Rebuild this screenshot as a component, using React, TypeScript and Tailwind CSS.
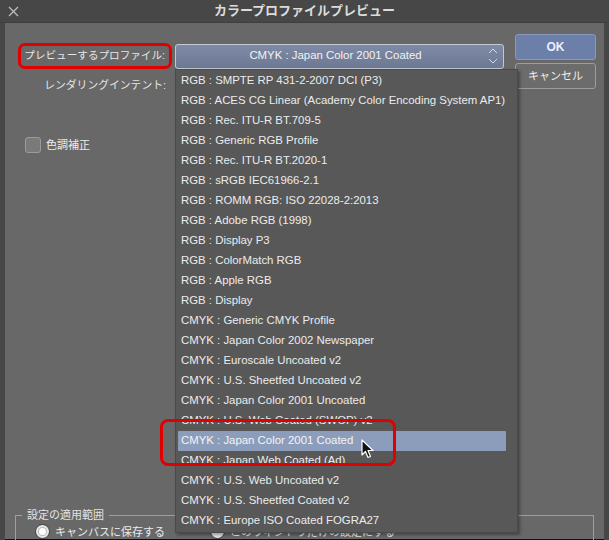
import React from "react";

const items = [
  "RGB : SMPTE RP 431-2-2007 DCI (P3)",
  "RGB : ACES CG Linear (Academy Color Encoding System AP1)",
  "RGB : Rec. ITU-R BT.709-5",
  "RGB : Generic RGB Profile",
  "RGB : Rec. ITU-R BT.2020-1",
  "RGB : sRGB IEC61966-2.1",
  "RGB : ROMM RGB: ISO 22028-2:2013",
  "RGB : Adobe RGB (1998)",
  "RGB : Display P3",
  "RGB : ColorMatch RGB",
  "RGB : Apple RGB",
  "RGB : Display",
  "CMYK : Generic CMYK Profile",
  "CMYK : Japan Color 2002 Newspaper",
  "CMYK : Euroscale Uncoated v2",
  "CMYK : U.S. Sheetfed Uncoated v2",
  "CMYK : Japan Color 2001 Uncoated",
  "CMYK : U.S. Web Coated (SWOP) v2",
  "CMYK : Japan Color 2001 Coated",
  "CMYK : Japan Web Coated (Ad)",
  "CMYK : U.S. Web Uncoated v2",
  "CMYK : U.S. Sheetfed Coated v2",
  "CMYK : Europe ISO Coated FOGRA27",
];

const selected = "CMYK : Japan Color 2001 Coated";

function Radio({ on }: { on?: boolean }) {
  return (
    <span className="flex h-[15px] w-[15px] shrink-0 items-center justify-center rounded-full border border-[#3a3a3a] bg-[#e8e8e8]">
      {on && <span className="h-[7px] w-[7px] rounded-full bg-white shadow-[0_0_0_1px_#bbb]" />}
    </span>
  );
}

export default function App() {
  return (
    <div
      className="relative flex h-[540px] w-[609px] flex-col overflow-hidden whitespace-nowrap bg-[#474747] text-[11.4px] text-[#ececec]"
      style={{ fontFamily: '"Liberation Sans", "Noto Sans CJK JP", sans-serif' }}
    >
      {/* title bar */}
      <div className="relative flex h-[23px] shrink-0 items-center justify-center border-b border-[#3e3e3e]">
        <svg className="absolute left-[8px] top-[6px]" width="11" height="11" viewBox="0 0 11 11">
          <path d="M1 1L10 10M10 1L1 10" stroke="#bdbdbd" strokeWidth="1.3" />
        </svg>
        <span className="text-[13px] font-bold text-[#dcdcdc]">カラープロファイルプレビュー</span>
      </div>

      {/* body */}
      <div className="mx-[5px] flex flex-1 flex-col border-b border-[#111] bg-[#686868]">
        <div className="flex pt-[11px] pr-[8px]">
          <div className="flex flex-1 flex-col">
            <div className="mt-[9px] flex items-center">
              <div className="ml-[13px] flex h-[26px] w-[154px] items-center justify-end rounded-[7px] border-[3px] border-[#e10000] pr-[4px] text-[10.6px] text-[#e6e6e6]">
                プレビューするプロファイル:
              </div>
              <div className="ml-[3px] flex h-[25px] w-[329px] items-center rounded-[3px] border border-[#c3c9d4] bg-gradient-to-b from-[#7f8ba6] to-[#6d7893] pl-[8px] pr-[4px]">
                <span className="flex-1 text-center text-[#f2f2f2]">{selected}</span>
                <svg width="12" height="20" viewBox="0 0 12 20">
                  <path d="M2 7L6 3L10 7M2 13L6 17L10 13" fill="none" stroke="#d6dae2" strokeWidth="1" />
                </svg>
              </div>
            </div>
            <div className="mt-[4px] flex h-[25px] w-[161px] items-center justify-end text-[10.8px] text-[#e6e6e6]">
              レンダリングインテント:
            </div>
            <div className="mt-[39px] ml-[20px] flex items-center gap-[5px]">
              <span className="h-[16px] w-[16px] rounded-[3px] border border-[#9a9a9a] bg-[#7a7a7a]" />
              <span className="text-[11px]">色調補正</span>
            </div>
          </div>
          <div className="flex w-[81px] flex-col gap-[3px]">
            <button className="h-[26px] rounded-[3px] border border-[#8799c0] bg-[#6b7fa9] text-[12px] font-bold text-[#eef]">
              OK
            </button>
            <button className="h-[26px] rounded-[3px] border border-[#9c9c9c] bg-[#6c6c6c] text-[11px] text-[#eee]">
              キャンセル
            </button>
          </div>
        </div>

        <div className="flex-1" />

        {/* group box */}
        <fieldset className="mx-[10px] -mb-[10px] h-[42px] border border-[#9e9e9e] pl-[19px] pr-[14px]">
          <legend className="ml-[-13px] px-[5px] text-[11px] text-[#e2e2e2]">設定の適用範囲</legend>
          <div className="flex items-center">
            <label className="flex w-[175px] items-center gap-[5px]">
              <Radio on />
              <span className="text-[11px]">キャンバスに保存する</span>
            </label>
            <label className="flex items-center gap-[5px]">
              <Radio />
              <span className="text-[11px]">このウィンドウだけの設定にする</span>
            </label>
          </div>
        </fieldset>
      </div>

      {/* dropdown list */}
      <div className="absolute left-[175px] top-[69px] w-[343px] border border-[#4a4a4a] bg-[#585858] py-[1px] shadow-[2px_2px_3px_rgba(0,0,0,0.35)]">
        {items.map((it) => (
          <div
            key={it}
            className={
              "ml-[2px] mr-[11px] flex h-[20px] items-center rounded-[1px] px-[3px] " +
              (it === selected ? "bg-[#8c9dbc] text-[#f4f4f4]" : "text-[#ececec]")
            }
          >
            {it}
          </div>
        ))}
      </div>

      {/* highlight marker */}
      <div className="pointer-events-none absolute left-[160px] top-[419px] h-[47px] w-[236px] rounded-[8px] border-[3px] border-[#e10000]" />

      {/* cursor */}
      <svg className="absolute left-[361px] top-[439px]" width="14" height="20" viewBox="0 0 14 20">
        <path d="M1 1L1 16L4.5 12.5L7 18.5L9.5 17.5L7 11.5L12 11.5Z" fill="#111" stroke="#fff" strokeWidth="1.2" strokeLinejoin="round" />
      </svg>
    </div>
  );
}
